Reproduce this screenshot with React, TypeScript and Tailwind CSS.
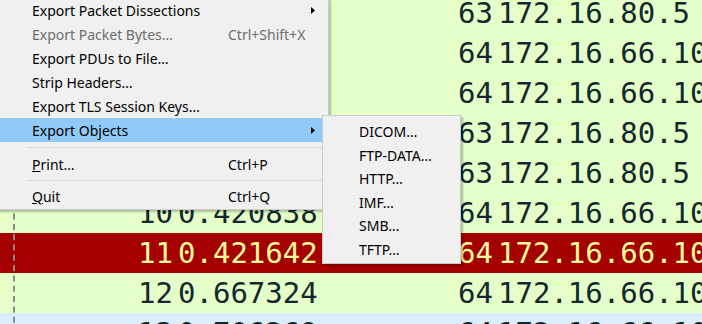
import React from "react";

type Row = { no: string; time: string; len: string; src: string; kind: "green" | "red" | "blue" };

const rows: Row[] = [
  { no: "4", time: "0.101224", len: "63", src: "172.16.80.5", kind: "green" },
  { no: "5", time: "0.101502", len: "64", src: "172.16.66.10", kind: "green" },
  { no: "6", time: "0.102040", len: "64", src: "172.16.66.10", kind: "green" },
  { no: "7", time: "0.203118", len: "63", src: "172.16.80.5", kind: "green" },
  { no: "8", time: "0.310467", len: "63", src: "172.16.80.5", kind: "green" },
  { no: "10", time: "0.420838", len: "64", src: "172.16.66.10", kind: "green" },
  { no: "11", time: "0.421642", len: "64", src: "172.16.66.10", kind: "red" },
  { no: "12", time: "0.667324", len: "64", src: "172.16.66.10", kind: "green" },
  { no: "13", time: "0.706269", len: "64", src: "172.16.66.10", kind: "blue" },
];

const rowColors = {
  green: "bg-[#e4ffc7] text-[#12272e]",
  red: "bg-[#a40000] text-[#fffc9c]",
  blue: "bg-[#daeeff] text-[#12272e]",
};

type Item =
  | { type: "sep"; h: string }
  | {
      type: "item";
      label: React.ReactNode;
      shortcut?: string;
      sub?: boolean;
      disabled?: boolean;
      active?: boolean;
    };

const items: Item[] = [
  { type: "item", label: "Export Packet Dissections", sub: true },
  { type: "item", label: "Export Packet Bytes…", shortcut: "Ctrl+Shift+X", disabled: true },
  { type: "item", label: "Export PDUs to File…" },
  { type: "item", label: "Strip Headers…" },
  { type: "item", label: "Export TLS Session Keys…" },
  { type: "item", label: "Export Objects", sub: true, active: true },
  { type: "sep", h: "h-[10px]" },
  { type: "item", label: <><span className="underline">P</span>rint…</>, shortcut: "Ctrl+P" },
  { type: "sep", h: "h-[8px]" },
  { type: "item", label: <><span className="underline">Q</span>uit</>, shortcut: "Ctrl+Q" },
];

const objects = ["DICOM…", "FTP-DATA…", "HTTP…", "IMF…", "SMB…", "TFTP…"];

function Arrow() {
  return (
    <svg width="4" height="7" viewBox="0 0 4 7" className="shrink-0">
      <path d="M0 0 L4 3.5 L0 7 Z" fill="#000" />
    </svg>
  );
}

export default function App() {
  return (
    <div className="relative w-[702px] h-[324px] overflow-hidden bg-[#e4ffc7]">
      {/* packet list */}
      <div
        className="flex flex-col -mt-[7px] text-[29px] leading-[40px]"
        style={{ fontFamily: '"DejaVu Sans Mono", monospace' }}
      >
        {rows.map((r) => (
          <div key={r.no} className={`flex h-[40px] whitespace-nowrap ${rowColors[r.kind]}`}>
            <div className="w-[173px] shrink-0 text-right">{r.no}</div>
            <div className="w-[200px] shrink-0 pl-[5px]">{r.time}</div>
            <div className="w-[120px] shrink-0 text-right">{r.len}</div>
            <div className="pl-[5px]">{r.src}</div>
          </div>
        ))}
      </div>
      <div className="absolute left-[13px] top-[193px] h-[140px] border-l-2 border-dashed border-[#8a8a8a]" />

      {/* File menu */}
      <div
        className="absolute left-[-3px] top-[-2px] w-[332px] flex flex-col bg-[#f0f0f0] border border-t-0 border-[#cccccc] pb-[1px] shadow-[2px_2px_2px_rgba(0,0,0,0.25)] text-[14px] text-black"
        style={{ fontFamily: '"Segoe UI", "Noto Sans", sans-serif' }}
      >
        {items.map((it, i) =>
          it.type === "sep" ? (
            <div key={i} className={`flex items-center pl-[30px] pr-[6px] ${it.h}`}>
              <div className="h-px flex-1 bg-[#d7d7d7]" />
            </div>
          ) : (
            <div
              key={i}
              className={`flex items-center h-[24px] pl-[34px] pr-[13px] whitespace-nowrap ${
                it.active ? "bg-[#91c9f7]" : ""
              } ${it.disabled ? "text-[#6d6d6d]" : ""}`}
            >
              <span className="w-[196px] shrink-0">{it.label}</span>
              <span className="flex-1">{it.shortcut}</span>
              {it.sub && <Arrow />}
            </div>
          )
        )}
      </div>

      {/* Export Objects submenu */}
      <div
        className="absolute left-[322px] top-[115px] w-[139px] flex flex-col bg-[#f0f0f0] border border-[#cccccc] shadow-[2px_2px_2px_rgba(0,0,0,0.25)] pt-[4px] pb-[2px] text-[14px] text-black"
        style={{ fontFamily: '"Segoe UI", "Noto Sans", sans-serif' }}
      >
        {objects.map((o) => (
          <div key={o} className="flex items-center h-[23.5px] pl-[36px]">
            {o}
          </div>
        ))}
      </div>
    </div>
  );
}
